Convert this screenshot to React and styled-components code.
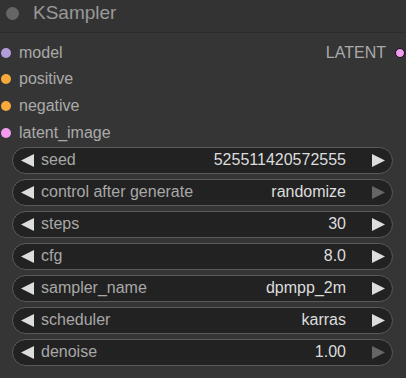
import React from "react";
import styled, { createGlobalStyle } from "styled-components";

const Global = createGlobalStyle`
  html, body { margin: 0; padding: 0; background: #353535; }
  body { font-family: "Liberation Sans", Arial, sans-serif; width: 406px; height: 378px; overflow: hidden; }
`;

const Node = styled.div`
  width: 406px;
  height: 378px;
  background: #353535;
  display: flex;
  flex-direction: column;
`;

const Header = styled.div`
  height: 32px;
  background: #333333;
  border-bottom: 1px solid #2c2c2c;
  display: flex;
  align-items: center;
  gap: 14px;
  padding-left: 6px;
  box-sizing: content-box;
`;

const HeaderDot = styled.span`
  width: 13px;
  height: 13px;
  border-radius: 50%;
  background: #666;
  margin-top: -6px;
`;

const Title = styled.span`
  font-size: 19px;
  color: #999;
  margin-top: -6px;
`;

const Slots = styled.div`
  padding-top: 6.5px;
  display: flex;
  flex-direction: column;
`;

const SlotRow = styled.div`
  height: 26.6px;
  display: flex;
  align-items: center;
  justify-content: space-between;
`;

const Slot = styled.div`
  display: flex;
  align-items: center;
  gap: ${(p) => (p.$right ? "9px" : "8px")};
  font-size: 16px;
  color: #aaa;
  flex-direction: ${(p) => (p.$right ? "row-reverse" : "row")};
  margin-left: ${(p) => (p.$right ? "0" : "1px")};
  margin-right: ${(p) => (p.$right ? "1px" : "0")};
`;

const Dot = styled.span`
  width: 10px;
  height: 10px;
  border-radius: 50%;
  background: ${(p) => p.$color};
  box-sizing: border-box;
  border: ${(p) => (p.$outlined ? "1px solid #111" : "none")};
  flex: none;
`;

const Widgets = styled.div`
  margin-top: 1px;
  display: flex;
  flex-direction: column;
  gap: 5px;
  padding: 0 13px 0 12px;
`;

const Widget = styled.div`
  height: 27px;
  box-sizing: border-box;
  border: 1px solid #5a5a5a;
  border-radius: 14px;
  background: #222;
  display: flex;
  align-items: center;
  padding: 0 7px 0 8px;
  font-size: 16px;
`;

const Arrow = styled.svg`
  width: 14px;
  height: 13px;
  flex: none;
  fill: ${(p) => (p.$disabled ? "#666" : "#ddd")};
`;

const Label = styled.span`
  color: #a8a8a8;
  margin-left: 6px;
  flex: 1;
  white-space: nowrap;
`;

const Value = styled.span`
  color: #ddd;
  margin-right: 25px;
  white-space: nowrap;
`;

const Left = ({ disabled }) => (
  <Arrow viewBox="0 0 14 13" $disabled={disabled}>
    <polygon points="0,6.5 13,0 13,13" />
  </Arrow>
);
const Right = ({ disabled }) => (
  <Arrow viewBox="0 0 14 13" $disabled={disabled}>
    <polygon points="14,6.5 1,0 1,13" />
  </Arrow>
);

const widgets = [
  { label: "seed", value: "525511420572555" },
  { label: "control after generate", value: "randomize", rightDisabled: true },
  { label: "steps", value: "30" },
  { label: "cfg", value: "8.0" },
  { label: "sampler_name", value: "dpmpp_2m" },
  { label: "scheduler", value: "karras" },
  { label: "denoise", value: "1.00", rightDisabled: true },
];

export default function App() {
  return (
    <>
      <Global />
      <Node>
        <Header>
          <HeaderDot />
          <Title>KSampler</Title>
        </Header>
        <Slots>
          <SlotRow>
            <Slot>
              <Dot $color="#b39ddb" />
              model
            </Slot>
            <Slot $right>
              <Dot $color="#f19cf0" $outlined />
              LATENT
            </Slot>
          </SlotRow>
          <SlotRow>
            <Slot>
              <Dot $color="#f7a93b" />
              positive
            </Slot>
          </SlotRow>
          <SlotRow>
            <Slot>
              <Dot $color="#f7a93b" />
              negative
            </Slot>
          </SlotRow>
          <SlotRow>
            <Slot>
              <Dot $color="#f19cf0" />
              latent_image
            </Slot>
          </SlotRow>
        </Slots>
        <Widgets>
          {widgets.map((w) => (
            <Widget key={w.label}>
              <Left />
              <Label>{w.label}</Label>
              <Value>{w.value}</Value>
              <Right disabled={w.rightDisabled} />
            </Widget>
          ))}
        </Widgets>
      </Node>
    </>
  );
}
